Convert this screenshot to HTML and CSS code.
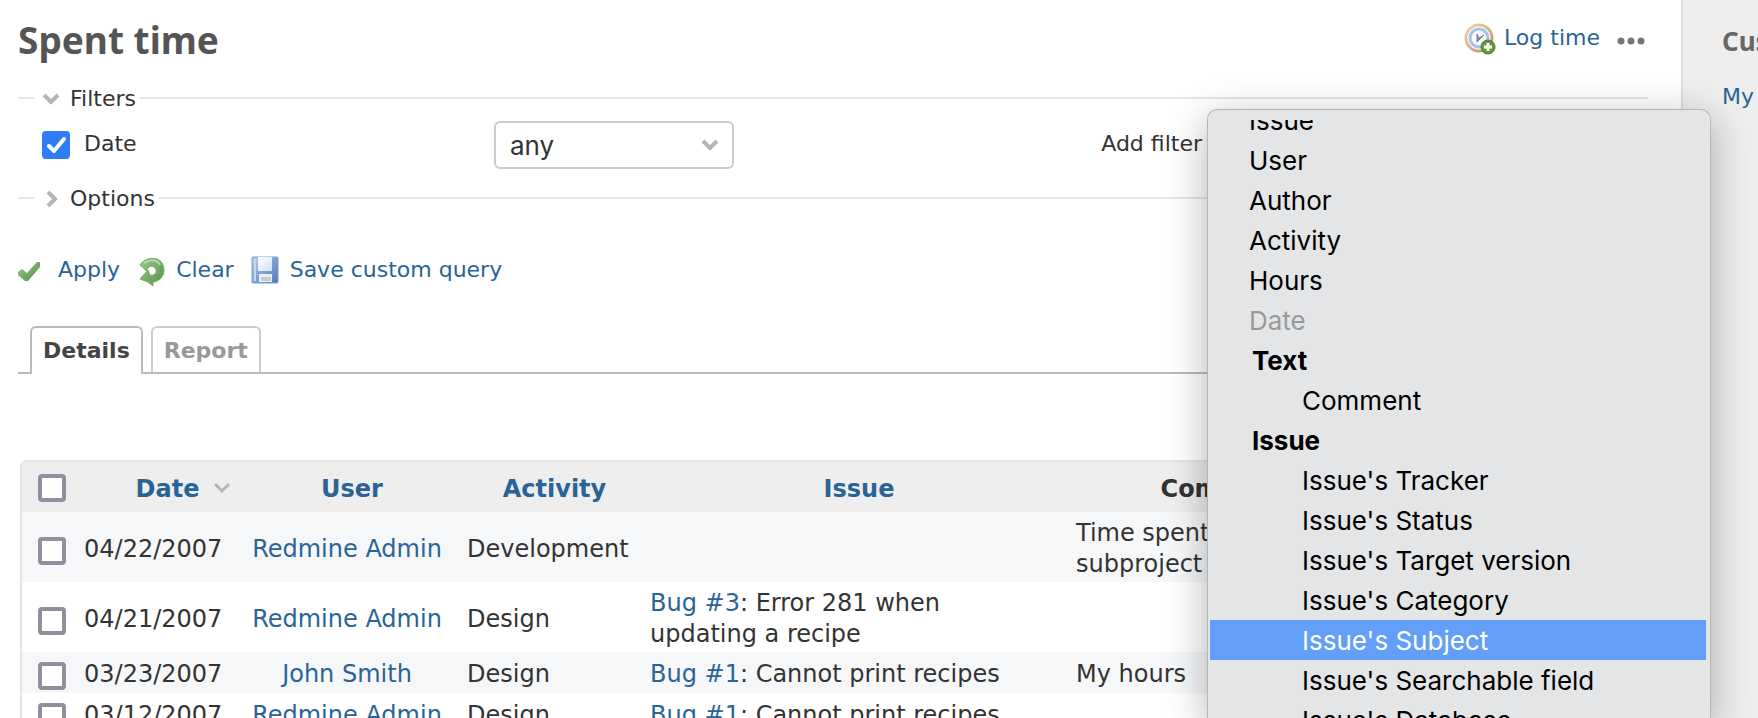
FILE: index.html
```html
<!DOCTYPE html>
<html lang="en">
<head>
<meta charset="utf-8">
<title>Spent time</title>
<link rel="stylesheet" href="styles.css">
</head>
<body>
<svg class="defs" aria-hidden="true">
  <defs>
    <linearGradient id="green" x1="0" y1="0" x2="1" y2="1"><stop offset="0" stop-color="#9ccb8c"/><stop offset="1" stop-color="#4f8f45"/></linearGradient>
    <linearGradient id="blue" x1="0" y1="0" x2="1" y2="1"><stop offset="0" stop-color="#b4cdee"/><stop offset="1" stop-color="#4a78bd"/></linearGradient>
    <linearGradient id="paper" x1="0" y1="0" x2="1" y2="1"><stop offset="0" stop-color="#ffffff"/><stop offset="1" stop-color="#cfdff5"/></linearGradient>
    <linearGradient id="gold" x1="0" y1="0" x2="1" y2="1"><stop offset="0" stop-color="#ecd9ab"/><stop offset="1" stop-color="#b8935f"/></linearGradient>
  </defs>
</svg>
<div class="page">
  <main class="content">
    <header class="title-row">
      <h1>Spent time</h1>
      <div class="actions">
        <a class="icon-link" href="#log">
          <svg class="icon" viewBox="0 0 32 32" aria-hidden="true">
            <circle cx="15" cy="15" r="13" fill="#fff" stroke="url(#gold)" stroke-width="3"/>
            <circle cx="15" cy="15" r="9" fill="#f4f8fe" stroke="#a9c1e8" stroke-width="3"/>
            <path d="M13 11v8l7-7-5 3z" fill="#7b8794" stroke="#7b8794" stroke-width="1"/>
            <circle cx="24" cy="24" r="7" fill="#64963f" stroke="#467a2c"/>
            <path d="M24 20v8M20 24h8" stroke="#fff" stroke-width="3"/>
          </svg>
          <span>Log time</span></a>
        <button class="more" type="button" aria-label="More actions">
          <svg class="icon" viewBox="0 0 32 32"><g fill="#757575"><circle cx="5" cy="18" r="3.5"/><circle cx="15" cy="18" r="3.5"/><circle cx="25" cy="18" r="3.5"/></g></svg>
        </button>
      </div>
    </header>

    <form>
      <fieldset class="filters">
        <legend><svg class="chevron" viewBox="0 0 18 18" aria-hidden="true"><path d="M2 5l7 7 7-7"/></svg>Filters</legend>
        <div class="filter-row">
          <label class="filter-name"><input class="check on" type="checkbox" checked><span>Date</span></label>
          <select class="operator" aria-label="Date operator"><option>any</option></select>
          <label class="add-filter" for="add">Add filter</label>
          <select class="add-select" id="add"><option></option></select>
        </div>
      </fieldset>
      <fieldset class="options">
        <legend><svg class="chevron" viewBox="0 0 18 18" aria-hidden="true"><path d="M6 2l7 7-7 7"/></svg>Options</legend>
      </fieldset>
      <p class="buttons">
        <a class="icon-link" href="#apply">
          <svg class="icon" viewBox="0 0 32 32" aria-hidden="true"><path d="M0 17l4-3 5 4L19 7h3v5L10 26H7L0 20z" fill="url(#green)"/></svg>
          <span>Apply</span></a>
        <a class="icon-link" href="#clear">
          <svg class="icon" viewBox="0 0 32 32" aria-hidden="true"><path d="M4 10C9 2 22 1 26 8c5 9 0 18-9 19v4l-5-4-8-3 8-9 2 5c4 1 7-2 6-5-1-4-6-5-8-2l-2 3c-2-2-3-4-6-6z" fill="url(#green)" stroke="#79ab6c" stroke-width="1"/><path d="M8 8c5-4 13-4 16 2" fill="none" stroke="#b5d8a8" stroke-width="2"/></svg>
          <span>Clear</span></a>
        <a class="icon-link" href="#save">
          <svg class="icon" viewBox="0 0 32 32" aria-hidden="true"><rect x="2" y="2" width="26" height="26" rx="1" fill="url(#blue)" stroke="#7d9fd3"/><rect x="8" y="2" width="14" height="14" fill="url(#paper)"/><rect x="9" y="19" width="13" height="8" fill="#efefef"/><rect x="11" y="22" width="10" height="4" fill="#c7cbd2"/><path d="M5 4v22" stroke="#c5d9f3" stroke-width="2"/></svg>
          <span>Save custom query</span></a>
      </p>
    </form>

    <nav class="tabs">
      <a class="tab selected" href="#details">Details</a>
      <a class="tab" href="#report">Report</a>
    </nav>

    <div class="table-box">
      <table>
        <colgroup><col class="c-check"><col class="c-date"><col class="c-user"><col class="c-activity"><col class="c-issue"><col class="c-comment"><col></colgroup>
        <thead>
          <tr>
            <th class="pick"><input class="check" type="checkbox" aria-label="Select all"></th>
            <th class="sorted"><a href="#date">Date</a><svg class="chevron" viewBox="0 0 18 18" aria-hidden="true"><path d="M2 5l7 7 7-7"/></svg></th>
            <th><a href="#user">User</a></th>
            <th><a href="#activity">Activity</a></th>
            <th><a href="#issue">Issue</a></th>
            <th>Comment</th>
            <th></th>
          </tr>
        </thead>
        <tbody>
          <tr>
            <td class="pick"><input class="check" type="checkbox" aria-label="Select entry"></td>
            <td>04/22/2007</td><td class="user"><a href="#u1">Redmine Admin</a></td><td>Development</td><td></td><td>Time spent on a subproject</td><td></td>
          </tr>
          <tr>
            <td class="pick"><input class="check" type="checkbox" aria-label="Select entry"></td>
            <td>04/21/2007</td><td class="user"><a href="#u1">Redmine Admin</a></td><td>Design</td><td class="issue"><a href="#i3">Bug #3</a>: Error 281 when updating a recipe</td><td></td><td></td>
          </tr>
          <tr>
            <td class="pick"><input class="check" type="checkbox" aria-label="Select entry"></td>
            <td>03/23/2007</td><td class="user"><a href="#u2">John Smith</a></td><td>Design</td><td class="issue"><a href="#i1">Bug #1</a>: Cannot print recipes</td><td>My hours</td><td></td>
          </tr>
          <tr>
            <td class="pick"><input class="check" type="checkbox" aria-label="Select entry"></td>
            <td>03/12/2007</td><td class="user"><a href="#u1">Redmine Admin</a></td><td>Design</td><td class="issue"><a href="#i1">Bug #1</a>: Cannot print recipes</td><td></td><td></td>
          </tr>
        </tbody>
      </table>
    </div>
  </main>

  <aside class="sidebar">
    <h2>Custom queries</h2>
    <a href="#my">My queries</a>
  </aside>

  <div class="popup">
    <ul class="menu" role="listbox" aria-label="Add filter">
      <li role="option">Issue</li>
      <li role="option">User</li>
      <li role="option">Author</li>
      <li role="option">Activity</li>
      <li role="option">Hours</li>
      <li role="option" class="disabled" aria-disabled="true">Date</li>
      <li role="presentation" class="group">Text</li>
      <li role="option" class="child">Comment</li>
      <li role="presentation" class="group">Issue</li>
      <li role="option" class="child">Issue's Tracker</li>
      <li role="option" class="child">Issue's Status</li>
      <li role="option" class="child">Issue's Target version</li>
      <li role="option" class="child">Issue's Category</li>
      <li role="option" class="child active" aria-selected="true">Issue's Subject</li>
      <li role="option" class="child">Issue's Searchable field</li>
      <li role="option" class="child">Issue's Database</li>
    </ul>
  </div>
</div>
</body>
</html>
```
FILE: styles.css
```css
* { box-sizing: border-box; }

body {
  margin: 0;
  color: #333;
  background: #fff;
  font: 22px/30px Verdana, "DejaVu Sans", sans-serif;
}

a { color: #2a6496; text-decoration: none; }

.defs { position: absolute; width: 0; height: 0; }

.page {
  position: relative;
  display: flex;
  height: 100vh;
  overflow: hidden;
}

.content {
  flex: 1;
  min-width: 0;
  padding: 16px 33px 0 18px;
}

/* Title */
.title-row {
  display: flex;
  justify-content: space-between;
  align-items: flex-start;
  height: 66px;
}

h1 {
  margin: 0;
  color: #555;
  font: bold 37px/48px "Trebuchet MS", "Noto Sans", sans-serif;
}

.actions { display: flex; gap: 16px; padding-top: 7px; }

.icon-link { display: inline-flex; gap: 8px; }
.icon { display: block; width: 32px; height: 32px; }

.more { border: 0; padding: 0; background: none; }

/* Filters */
fieldset {
  margin: 0;
  min-width: 0;
  border: 0;
  border-top: 2px solid #e4e4e4;
  padding: 0 0 0 24px;
}

legend {
  display: flex;
  align-items: center;
  gap: 10px;
  margin-left: -8px;
  padding: 2px 4px 0 8px;
}

.chevron {
  width: 18px;
  height: 18px;
  fill: none;
  stroke: #b4b4b4;
  stroke-width: 4;
}

.filters { height: 100px; }
.options { height: 71px; }

.filter-row {
  display: flex;
  align-items: flex-start;
  padding-top: 7px;
}

.filter-name {
  display: flex;
  flex: none;
  gap: 14px;
  width: 452px;
  padding-top: 8px;
}

.check {
  display: block;
  appearance: none;
  flex: none;
  width: 28px;
  height: 28px;
  margin: 0;
  border: 4px solid #8f8f9d;
  border-radius: 4px;
  background: #fff;
}

.check.on {
  margin-top: 2px;
  border: 0;
  background: #2f7df6 url("data:image/svg+xml,%3Csvg xmlns='http://www.w3.org/2000/svg' viewBox='0 0 28 28'%3E%3Cpath d='M7 15l5 5L22 8' fill='none' stroke='white' stroke-width='4' stroke-linecap='round' stroke-linejoin='round'/%3E%3C/svg%3E");
}

select {
  appearance: none;
  height: 48px;
  border: 2px solid #ccc;
  border-radius: 6px;
  padding: 0 14px;
  color: #333;
  font: 26px Inter, sans-serif;
  background: #fff url("data:image/svg+xml,%3Csvg xmlns='http://www.w3.org/2000/svg' viewBox='0 0 18 18'%3E%3Cpath d='M2 5l7 7 7-7' fill='none' stroke='%23b4b4b4' stroke-width='4'/%3E%3C/svg%3E") no-repeat right 13px center / 18px;
}

.operator { flex: none; width: 240px; }
.add-filter { flex: none; margin-left: auto; padding: 8px 8px 0 0; }
.add-select { flex: none; width: 438px; }

.buttons { display: flex; gap: 16px; margin: 0; padding-top: 2px; }

/* Tabs */
.tabs {
  display: flex;
  gap: 8px;
  margin: 39px 0 86px;
  border-bottom: 2px solid #bbb;
  padding-left: 12px;
}

.tab {
  border: 2px solid #ccc;
  border-bottom: 0;
  border-radius: 6px 6px 0 0;
  padding: 8px 11px 6px;
  color: #999;
  font-weight: bold;
}

.tab.selected {
  margin-bottom: -2px;
  border-color: #bbb;
  background: #fff;
  color: #444;
}

/* Entries */
.table-box {
  margin: 0 2px;
  border: 2px solid #e4e4e4;
  border-radius: 6px 6px 0 0;
  overflow: hidden;
}

table {
  width: 100%;
  table-layout: fixed;
  border-collapse: collapse;
  font-size: 24px;
  line-height: 31px;
}

.c-check { width: 58px; }
.c-date { width: 161px; }
.c-user { width: 222px; }
.c-activity { width: 183px; }
.c-issue { width: 426px; }
.c-comment { width: 306px; }

th { height: 50px; padding: 4px 4px 0; background: #eee; }
td { padding: 6px 4px 2px; text-align: left; }
tbody tr:nth-child(odd) { background: #f6f7f9; }
td.user { padding-right: 14px; text-align: center; white-space: nowrap; }
td.issue { padding-right: 40px; }
th.pick { padding: 2px 0 0 16px; }
td.pick { padding: 10px 0 3px 16px; }

th.sorted { padding-left: 50px; white-space: nowrap; }
.sorted .chevron { margin-left: 14px; stroke-width: 3; }

/* Sidebar */
.sidebar {
  flex: 0 0 77px;
  overflow: hidden;
  border-left: 2px solid #ddd;
  padding: 26px 0 0 39px;
  background: #eee;
  white-space: nowrap;
}

.sidebar h2 {
  margin: 0 0 26px;
  color: #666;
  font: bold 26px/30px "Trebuchet MS", "Noto Sans", sans-serif;
}

/* Open filter list */
.popup {
  position: absolute;
  top: 109px;
  right: 47px;
  bottom: 0;
  width: 504px;
  border: 1px solid #b5b6b8;
  border-bottom: 0;
  border-radius: 10px 10px 0 0;
  padding: 10px 4px 0 2px;
  background: #e4e5e7;
  box-shadow: 0 10px 40px rgba(0, 0, 0, 0.3);
}

.menu {
  display: flex;
  flex-direction: column;
  height: 100%;
  margin: 0;
  padding: 0;
  overflow: hidden;
  list-style: none;
  color: #000;
  font: 26px/42px Inter, sans-serif;
}

.menu li { flex: none; height: 40px; padding-left: 39px; }
.menu li:first-child { margin-top: -20px; }
.menu .group { padding-left: 42px; font-weight: bold; }
.menu .child { padding-left: 92px; }
.menu .disabled { color: #999; }
.menu .active { background: #639ff8; color: #fff; }
```
